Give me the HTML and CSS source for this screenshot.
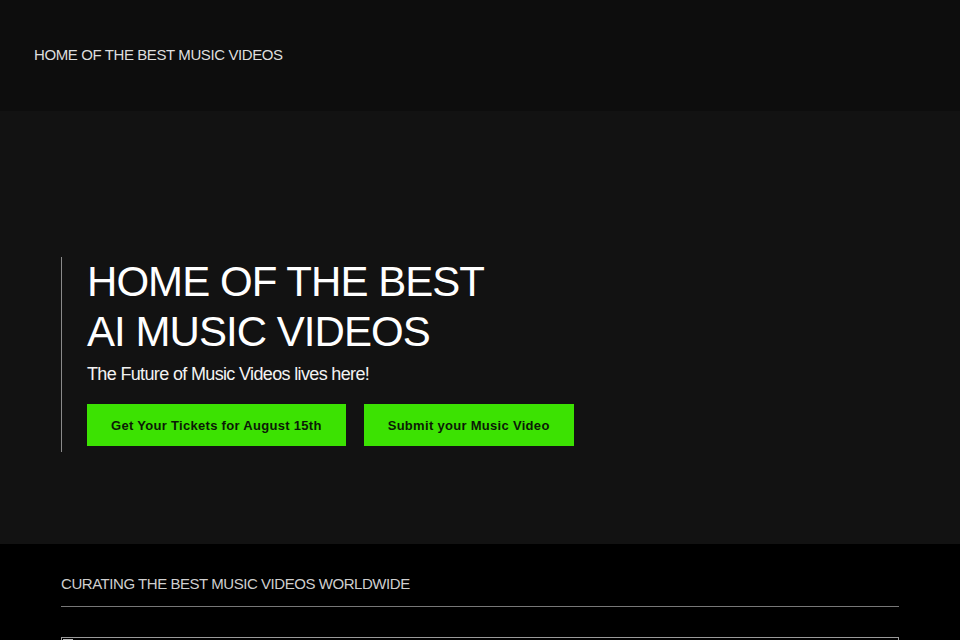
FILE: index.html
```html
<!DOCTYPE html>
<html lang="en">
<head>
<meta charset="utf-8">
<title>Home of the Best Music Videos</title>
<link rel="stylesheet" href="styles.css">
</head>
<body>
<header class="site-header">
  <div class="brand">HOME OF THE BEST MUSIC VIDEOS</div>
</header>
<section class="hero">
  <div class="hero-content">
    <h1 class="hero-title">HOME OF THE BEST<br>AI MUSIC VIDEOS</h1>
    <p class="hero-sub">The Future of Music Videos lives here!</p>
    <div class="hero-actions">
      <a class="btn" href="#">Get Your Tickets for August 15th</a>
      <a class="btn" href="#">Submit your Music Video</a>
    </div>
  </div>
</section>
<section class="curating">
  <h2 class="curating-title">CURATING THE BEST MUSIC VIDEOS WORLDWIDE</h2>
  <hr class="rule">
  <div class="embed">
    <svg class="broken" width="10" height="8" viewBox="0 0 10 8" aria-hidden="true">
      <rect x="0.5" y="0.5" width="9" height="7" fill="#e8e8e8" stroke="#bbb"/>
    </svg>
  </div>
</section>
</body>
</html>
```
FILE: styles.css
```css
* { box-sizing: border-box; }
html, body { margin: 0; padding: 0; }
body {
  background: #000;
  font-family: "Liberation Sans", Arial, sans-serif;
  color: #fff;
  overflow: hidden;
  height: 640px;
}
.site-header {
  background: #0d0d0d;
  height: 111px;
  padding: 46px 0 0 34px;
}
.brand {
  font-size: 15px;
  line-height: 17px;
  color: #dedede;
  letter-spacing: -0.4px;
}
.hero {
  background: #121212;
  height: 433px;
  padding: 146px 0 0 61px;
}
.hero-content {
  border-left: 1px solid #8a8a8a;
  padding: 0 0 6px 25px;
  width: max-content;
}
.hero-title {
  margin: 0;
  font-weight: normal;
  font-size: 42px;
  line-height: 50px;
  letter-spacing: -0.95px;
  color: #fff;
}
.hero-sub {
  margin: 6px 0 0;
  font-size: 18px;
  line-height: 22px;
  letter-spacing: -0.65px;
  color: #f2f2f2;
}
.hero-actions {
  display: flex;
  gap: 18px;
  margin-top: 19px;
}
.btn {
  display: flex;
  align-items: center;
  height: 42px;
  padding: 0 24px;
  background: #3ce202;
  color: #0b1a06;
  font-weight: bold;
  font-size: 13px;
  letter-spacing: 0.3px;
  text-decoration: none;
}
.curating {
  padding: 31px 61px 0;
}
.curating-title {
  margin: 0;
  font-weight: normal;
  font-size: 15px;
  line-height: 17px;
  letter-spacing: -0.45px;
  color: #cfcfcf;
}
.rule {
  margin: 14px 0 0;
  border: 0;
  height: 1px;
  background: #777;
}
.embed {
  margin-top: 30px;
  height: 120px;
  border: 1px solid #9a9a9a;
  padding: 1px;
}
.broken { display: block; }
```
